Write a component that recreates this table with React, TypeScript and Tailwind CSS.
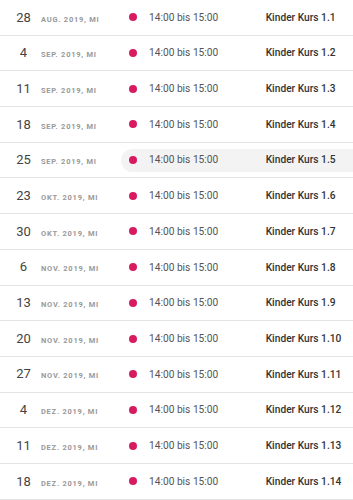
const rows = [
  ['28', 'Aug. 2019, Mi', '1.1'],
  ['4', 'Sep. 2019, Mi', '1.2'],
  ['11', 'Sep. 2019, Mi', '1.3'],
  ['18', 'Sep. 2019, Mi', '1.4'],
  ['25', 'Sep. 2019, Mi', '1.5'],
  ['23', 'Okt. 2019, Mi', '1.6'],
  ['30', 'Okt. 2019, Mi', '1.7'],
  ['6', 'Nov. 2019, Mi', '1.8'],
  ['13', 'Nov. 2019, Mi', '1.9'],
  ['20', 'Nov. 2019, Mi', '1.10'],
  ['27', 'Nov. 2019, Mi', '1.11'],
  ['4', 'Dez. 2019, Mi', '1.12'],
  ['11', 'Dez. 2019, Mi', '1.13'],
  ['18', 'Dez. 2019, Mi', '1.14'],
]

export default function App() {
  return (
    <div className="min-h-screen bg-white font-['Roboto',sans-serif]">
      {rows.map(([day, month, nr]) => {
        const active = nr === '1.5'
        return (
          <div key={nr} className="box-border flex h-[35.7px] items-center border-b border-[#e4e4e4]">
            <div className="flex w-[121px] shrink-0 items-baseline pl-[10px]">
              <span className="w-[27px] text-center text-[13px] text-[#444]">{day}</span>
              <span className="ml-[4px] text-[7.5px] font-bold uppercase tracking-[0.75px] text-[#999]">{month}</span>
            </div>
            <div
              className={`flex h-[23px] flex-1 items-center rounded-l-full pl-[7.5px] ${
                active ? 'bg-[#f3f3f3]' : ''
              }`}
            >
              <span className="h-2 w-2 shrink-0 rounded-full bg-[#d81b60]" />
              <span className="ml-[12.5px] w-[116.7px] shrink-0 text-[10.2px] text-[#555]">14:00 bis 15:00</span>
              <span className="text-[10.2px] font-medium text-[#333]">Kinder Kurs {nr}</span>
            </div>
          </div>
        )
      })}
    </div>
  )
}
